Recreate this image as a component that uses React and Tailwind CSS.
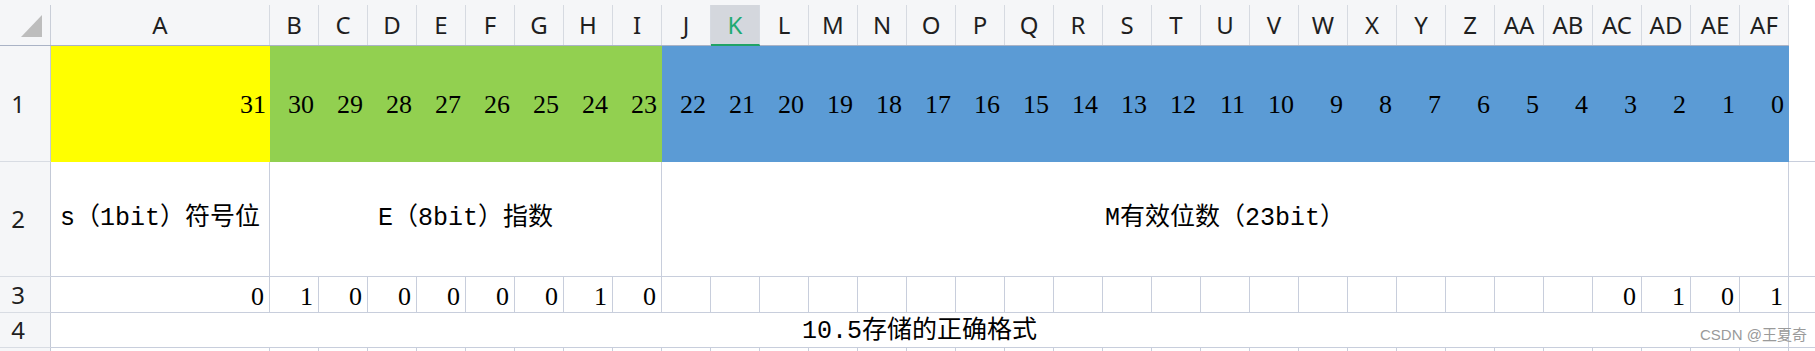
const COLS = ['A', 'B', 'C', 'D', 'E', 'F', 'G', 'H', 'I', 'J', 'K', 'L', 'M', 'N', 'O', 'P', 'Q', 'R', 'S', 'T', 'U', 'V', 'W', 'X', 'Y', 'Z', 'AA', 'AB', 'AC', 'AD', 'AE', 'AF'];

const BITS = Array.from({ length: 32 }, (_, i) => 31 - i);
const ROW3 = ['0', '1', '0', '0', '0', '0', '0', '1', '0', '', '', '', '', '', '', '', '', '', '', '', '', '', '', '', '', '', '', '', '0', '1', '0', '1'];

const num = "font-['Liberation_Serif',serif] text-[26px] text-black";
const label = "font-['Liberation_Mono','Noto_Sans_CJK_SC',monospace] text-[25px] text-black";

function RowHead({ n, h }) {
  return (
    <div className={`w-[51px] shrink-0 ${h} bg-[#f5f6f8] border-r border-b border-r-[#c3c9d6] border-b-[#d8dce3] flex items-center justify-center pr-[14px] font-['Noto_Sans',sans-serif] text-[24px] text-[#1f1f1f]`}>
      {n}
    </div>
  );
}

function HeaderRow() {
  return (
    <div className="flex h-[46px] bg-[#f5f6f8]">
      <div className="w-[51px] shrink-0 flex flex-col border-b border-[#aab3c6]">
        <div className="h-[5px]" />
        <div className="flex-1 border-r border-[#c9ced8] relative">
          <svg className="absolute left-[21px] top-[10px]" width="21" height="22" viewBox="0 0 21 22">
            <polygon points="21,0 21,22 0,22" fill="#bdbdbd" />
          </svg>
        </div>
      </div>
      {COLS.map((c) => {
        const active = c === 'K';
        return (
          <div
            key={c}
            className={`${c === 'A' ? 'w-[219px]' : 'w-[49px]'} shrink-0 flex flex-col border-b ${active ? 'border-[#21a366]' : 'border-[#aab3c6]'}`}
          >
            <div className="h-[5px]" />
            <div
              className={`flex-1 flex items-center justify-center border-r border-r-[#d6dae1] font-['Noto_Sans',sans-serif] text-[24px] ${active ? 'bg-[#d4d7dd] text-[#1faa73] border-b border-b-[#21a366]' : 'text-[#1f1f1f]'}`}
            >
              {c}
            </div>
          </div>
        );
      })}
      <div className="flex-1 bg-white" />
    </div>
  );
}

export default function App() {
  return (
    <div className="w-[1815px] h-[351px] overflow-hidden bg-white relative">
      <HeaderRow />

      {/* row 1: bit numbers */}
      <div className="flex h-[116px]">
        <RowHead n="1" h="h-[116px]" />
        <div className={`w-[219px] shrink-0 bg-[#ffff00] flex items-center justify-end pr-[4px] ${num}`}>31</div>
        <div className="w-[392px] shrink-0 bg-[#92d050] flex">
          {BITS.slice(1, 9).map((b) => (
            <div key={b} className={`w-[49px] flex items-center justify-end pr-[5px] ${num}`}>{b}</div>
          ))}
        </div>
        <div className="w-[1127px] shrink-0 bg-[#5b9bd5] flex">
          {BITS.slice(9).map((b) => (
            <div key={b} className={`w-[49px] flex items-center justify-end pr-[5px] ${num}`}>{b}</div>
          ))}
        </div>
        <div className="flex-1 border-b border-[#c8cedc]" />
      </div>

      {/* row 2: field labels */}
      <div className="flex h-[115px]">
        <RowHead n="2" h="h-[115px]" />
        <div className={`w-[219px] shrink-0 border-r border-b border-[#c8cedc] flex items-center justify-center ${label}`}>s（1bit）符号位</div>
        <div className={`w-[392px] shrink-0 border-r border-b border-[#c8cedc] flex items-center justify-center ${label}`}>E（8bit）指数</div>
        <div className={`w-[1127px] shrink-0 border-r border-b border-[#c8cedc] flex items-center justify-center ${label}`}>M有效位数（23bit）</div>
        <div className="flex-1 border-b border-[#c8cedc]" />
      </div>

      {/* row 3: stored bits */}
      <div className="flex h-[36px]">
        <RowHead n="3" h="h-[36px]" />
        {ROW3.map((v, i) => (
          <div
            key={i}
            className={`${i === 0 ? 'w-[219px]' : 'w-[49px]'} shrink-0 border-r border-b border-[#c8cedc] flex items-center justify-end pr-[5px] pt-[3px] ${num}`}
          >
            {v}
          </div>
        ))}
        <div className="flex-1 border-b border-[#c8cedc]" />
      </div>

      {/* row 4: caption */}
      <div className="flex h-[35px]">
        <RowHead n="4" h="h-[35px]" />
        <div className={`w-[1738px] shrink-0 border-r border-b border-[#c8cedc] flex items-center justify-center pt-[3px] ${label}`}>10.5存储的正确格式</div>
        <div className="flex-1 border-b border-[#c8cedc]" />
      </div>

      {/* row 5 (cut off) */}
      <div className="flex h-[20px]">
        <div className="w-[51px] shrink-0 bg-[#f5f6f8] border-r border-[#c3c9d6]" />
        {COLS.map((c) => (
          <div key={c} className={`${c === 'A' ? 'w-[219px]' : 'w-[49px]'} shrink-0 border-r border-[#c8cedc]`} />
        ))}
      </div>

      <div className="absolute left-[1700px] top-[324px] font-['Liberation_Sans','Noto_Sans_CJK_SC',sans-serif] text-[15px] text-[#9a9a9a] whitespace-nowrap">
        CSDN @王夏奇
      </div>
    </div>
  );
}
